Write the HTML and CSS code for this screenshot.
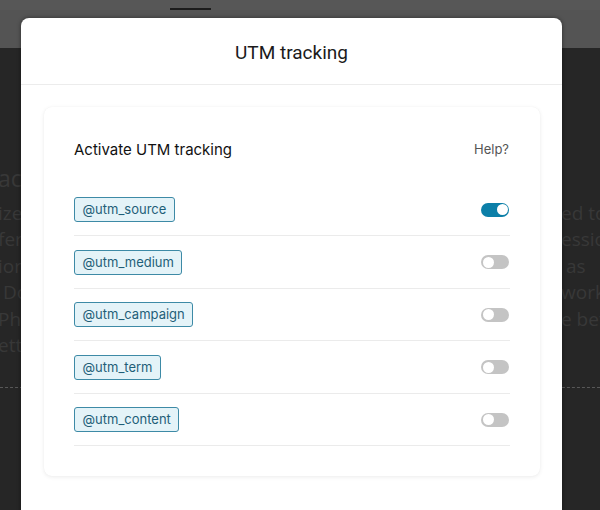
FILE: index.html
```html
<!DOCTYPE html>
<html lang="en">
<head>
<meta charset="utf-8">
<title>UTM tracking</title>
<link rel="stylesheet" href="styles.css">
</head>
<body>
<div class="page">
  <header class="topbar"><span class="tab"></span></header>
  <main class="bg-content">
    <div class="bg-row heading"><span>ac</span><span></span></div>
    <div class="bg-row"><span>ize</span><span>ed to</span></div>
    <div class="bg-row"><span>fer</span><span>essio</span></div>
    <div class="bg-row"><span>ior</span><span>&nbsp;as</span></div>
    <div class="bg-row"><span>&nbsp;Do</span><span>work</span></div>
    <div class="bg-row"><span>Pho</span><span>e bet</span></div>
    <div class="bg-row"><span>ett</span><span></span></div>
    <div class="dash"></div>
  </main>

  <div class="modal">
    <div class="modal-header">UTM tracking</div>
    <div class="modal-body">
      <section class="card">
        <div class="card-head">
          <span class="card-title">Activate UTM tracking</span>
          <span class="help">Help?</span>
        </div>
        <ul class="rows">
          <li class="row"><span class="tag">@utm_source</span><span class="toggle on"></span></li>
          <li class="row"><span class="tag">@utm_medium</span><span class="toggle"></span></li>
          <li class="row"><span class="tag">@utm_campaign</span><span class="toggle"></span></li>
          <li class="row"><span class="tag">@utm_term</span><span class="toggle"></span></li>
          <li class="row"><span class="tag">@utm_content</span><span class="toggle"></span></li>
        </ul>
      </section>
    </div>
  </div>
</div>
</body>
</html>
```

FILE: styles.css
```css
* { box-sizing: border-box; }
html, body { margin: 0; padding: 0; }
body {
  width: 600px;
  height: 510px;
  overflow: hidden;
  background: #262626;
  font-family: Inter, "Liberation Sans", sans-serif;
}
.page {
  position: relative;
  width: 600px;
  height: 510px;
  overflow: hidden;
}
.topbar {
  height: 48px;
  background: #545454;
  border-top: 10px solid #575757;
  display: flex;
  padding-left: 170px;
}
.tab {
  display: block;
  width: 41px;
  height: 2px;
  margin-top: -2px;
  background: #1c1c1c;
}
.bg-content {
  padding-top: 117px;
  color: #383838;
  font-family: "Open Sans", "Liberation Sans", sans-serif;
  font-size: 19px;
}
.bg-row {
  display: grid;
  grid-template-columns: 563px 1fr;
  line-height: 26.4px;
  white-space: nowrap;
  margin-left: -2px;
}
.bg-row.heading {
  font-size: 23px;
  line-height: 26px;
  margin-bottom: 9px;
}
.dash {
  margin-top: 29px;
  border-top: 1px dashed #585858;
}
.modal {
  position: absolute;
  top: 18px;
  left: 21px;
  width: 541px;
  bottom: -30px;
  background: #ffffff;
  border-radius: 8px;
  box-shadow: 0 0 4px rgba(0,0,0,0.45);
}
.modal-header {
  height: 67px;
  border-bottom: 1px solid #ececec;
  display: flex;
  align-items: center;
  justify-content: center;
  font-family: Roboto, "Liberation Sans", sans-serif;
  font-size: 19px;
  color: #1b1b1b;
  padding-top: 2px;
}
.modal-body {
  padding: 22px 22px 0 23px;
}
.card {
  background: #fff;
  border-radius: 8px;
  box-shadow: 0 1px 4px rgba(0,0,0,0.08), 0 0 1px rgba(0,0,0,0.05);
  padding: 32px 30px 30px 30px;
}
.card-head {
  display: flex;
  justify-content: space-between;
  align-items: center;
  height: 20px;
  margin-bottom: 24.75px;
}
.card-title {
  font-size: 15px;
  font-weight: 400;
  color: #111111;
}
.help {
  font-size: 13px;
  color: #555555;
  margin-right: 1px;
}
.rows {
  list-style: none;
  margin: 0;
  padding: 0;
}
.row {
  display: flex;
  justify-content: space-between;
  align-items: center;
  padding: 13.25px 0;
  border-bottom: 1px solid #ebebeb;
}
.tag {
  display: inline-flex;
  align-items: center;
  height: 25px;
  padding: 0 7.5px;
  border: 1px solid #3d8aa6;
  border-radius: 3px;
  background: #e4f3f8;
  color: #1f5f78;
  font-size: 13px;
  line-height: 1;
}
.toggle {
  position: relative;
  display: block;
  width: 28px;
  height: 14px;
  border-radius: 7px;
  background: #c4c4c4;
  margin-right: 1px;
}
.toggle::after {
  content: "";
  position: absolute;
  top: 1.5px;
  left: 1.5px;
  width: 11px;
  height: 11px;
  border-radius: 50%;
  background: #ffffff;
}
.toggle.on {
  background: #0c7fa8;
}
.toggle.on::after {
  left: auto;
  right: 1.5px;
}
```
